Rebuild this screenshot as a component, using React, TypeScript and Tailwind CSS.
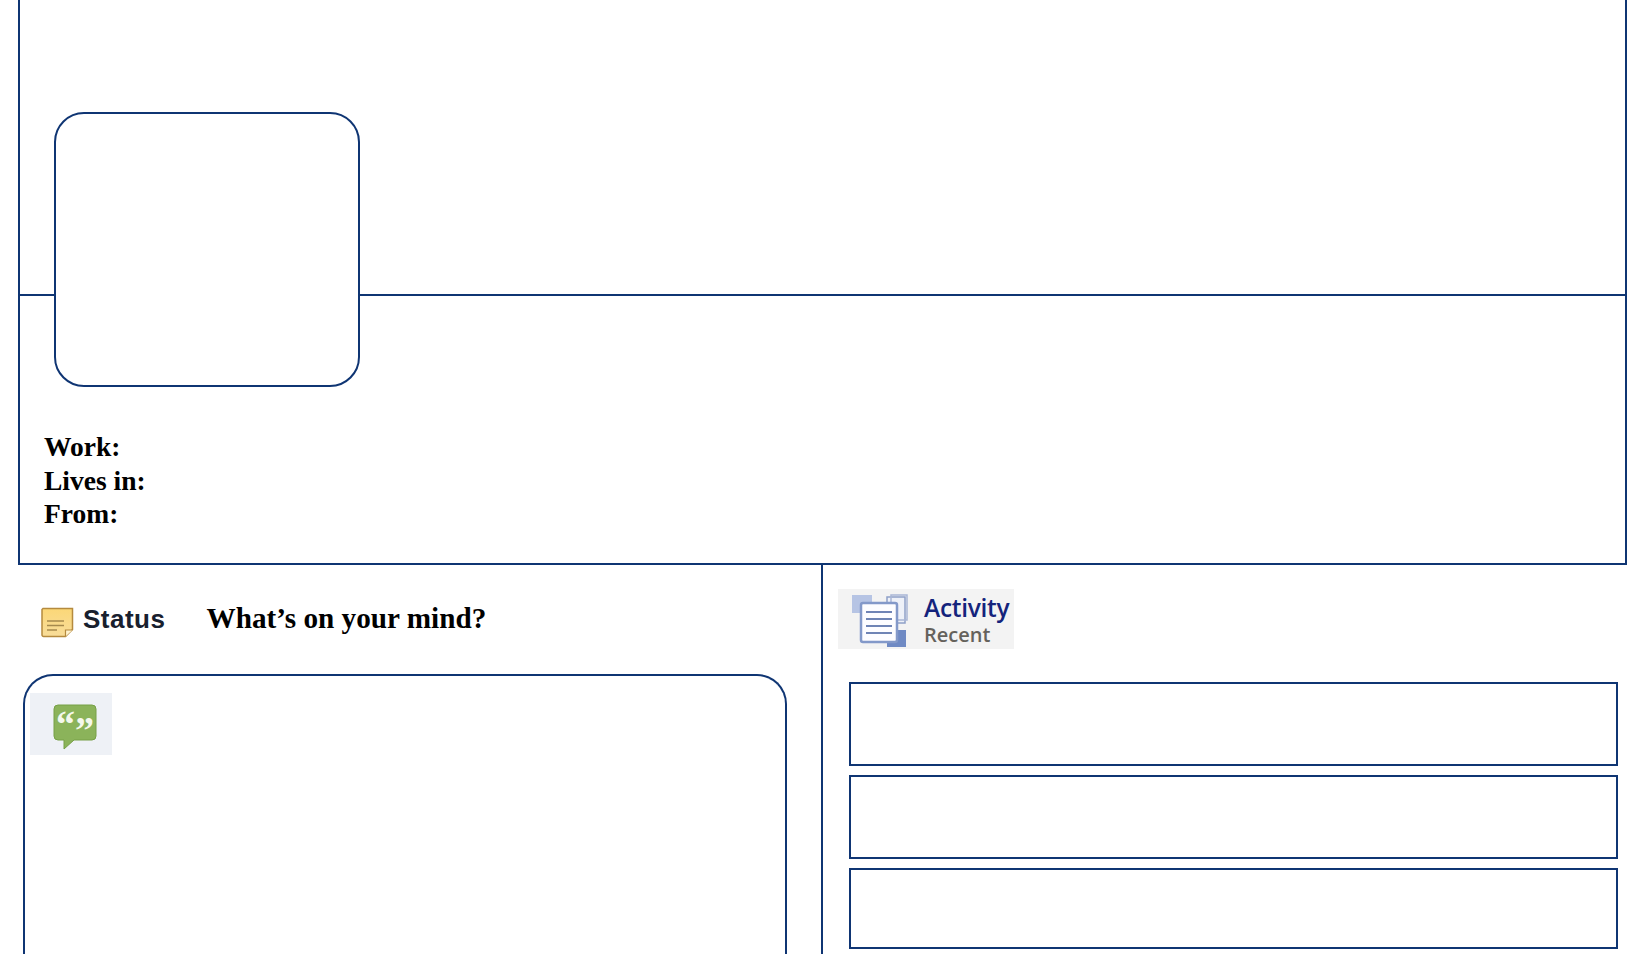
export default function App() {
  const serif = "font-['Liberation_Serif',serif] font-bold text-black";
  const line = "border-[#0f3573]";
  return (
    <div className="h-[954px] w-[1627px] overflow-hidden bg-white">
      <section className={`relative ml-[18px] h-[565px] w-[1609px] border-x-2 border-b-2 ${line}`}>
        <div className={`h-[296px] border-b-2 ${line}`} />
        <div className={`absolute left-[34px] top-[112px] h-[275px] w-[306px] rounded-[30px] border-2 bg-white ${line}`} />
        <div className={`pl-[24px] pt-[134px] text-[27.5px] leading-[33.6px] ${serif}`}>
          <p>Work:</p>
          <p>Lives in:</p>
          <p>From:</p>
        </div>
      </section>

      <div className="flex h-[389px]">
        <section className={`h-full w-[823px] border-r-2 pl-[23px] pr-[34px] ${line}`}>
          <header className="flex h-[109px] items-start pt-[39px]">
            <svg className="ml-[18px] mt-[3px] h-[31px] w-[33px] shrink-0" viewBox="0 0 33 31">
              <defs>
                <linearGradient id="note" x1="0" y1="0" x2="0" y2="1">
                  <stop offset="0" stopColor="#fbd777" />
                  <stop offset="1" stopColor="#f8dd9a" />
                </linearGradient>
              </defs>
              <path d="M2 1.5h29.5v21l-7 7H2.500a1.500 1.500 0 0 1-1.500-1.500V2.500z" fill="url(#note)" stroke="#b58a3e" strokeWidth="1.500" />
              <path d="M24.500 29.500v-6.500h7" fill="#fff3cf" stroke="#b58a3e" strokeWidth="1.200" />
              <path d="M6 14h17M6 18.500h17M6 23h10" stroke="#a68a4d" strokeWidth="1.500" />
            </svg>
            <span className="ml-[9px] font-['Liberation_Sans',sans-serif] text-[26px] font-bold leading-[30px] tracking-[0.5px] text-[#18202e]">Status</span>
            <h2 className={`ml-[41px] -mt-[2px] text-[29.2px] leading-[32px] ${serif}`}>What’s on your mind?</h2>
          </header>
          <div className={`h-[300px] w-[764px] rounded-t-[30px] border-x-2 border-t-2 ${line} pl-[5px] pt-[17px]`}>
            <div className="flex h-[62px] w-[82px] justify-center bg-[#eef1f6] pl-[7px] pt-[11px]">
              <svg className="h-[46px] w-[44px] overflow-visible" viewBox="0 0 44 46">
                <path d="M5 1h34a4 4 0 0 1 4 4v27a4 4 0 0 1-4 4H21L11 45v-9H5a4 4 0 0 1-4-4V5a4 4 0 0 1 4-4z" fill="#8bb35a" stroke="#76a046" />
                <text x="3" y="33" fontFamily="Liberation Serif, serif" fontWeight="700" fontSize="38" fill="#f4f8ec">“</text>
                <text x="22" y="39" fontFamily="Liberation Serif, serif" fontWeight="700" fontSize="38" fill="#f4f8ec">”</text>
              </svg>
            </div>
          </div>
        </section>

        <section className="flex-1 pr-[10px]">
          <div className="ml-[15px] mt-[24px] flex h-[60px] w-[176px] items-center bg-[#f3f3f3] pl-[13px]">
            <svg className="mt-[3px] h-[54px] w-[58px] shrink-0" viewBox="0 0 58 54">
              <rect x="1" y="1" width="20" height="18" fill="#b6c4e4" />
              <rect x="36" y="3" width="18" height="26" fill="#eef1f8" stroke="#8fa0c8" strokeWidth="1.500" />
              <rect x="40" y="1" width="16" height="25" fill="none" stroke="#a9b6d6" strokeWidth="1.500" />
              <rect x="36" y="36" width="19" height="17" fill="#6f8ac4" />
              <rect x="10" y="9" width="36" height="39" rx="2" fill="#fdfdff" stroke="#8399c9" strokeWidth="2.500" />
              <path d="M15 18h26M15 25h26M15 32h26M15 39h26" stroke="#6f84b5" strokeWidth="1.800" />
            </svg>
            <div className="ml-[15px] mt-[4px] font-['Open_Sans',sans-serif] font-semibold">
              <p className="text-[24.5px] leading-[26px] tracking-[-0.3px] text-[#14237c]">Activity</p>
              <p className="mt-[1px] text-[20px] leading-[25px] text-[#65625c]">Recent</p>
            </div>
          </div>
          <div className="ml-[26px] mt-[33px] flex w-[769px] flex-col gap-[9px]">
            <div className={`h-[84px] border-2 ${line}`} />
            <div className={`h-[84px] border-2 ${line}`} />
            <div className={`h-[81px] border-2 ${line}`} />
          </div>
        </section>
      </div>
    </div>
  );
}
